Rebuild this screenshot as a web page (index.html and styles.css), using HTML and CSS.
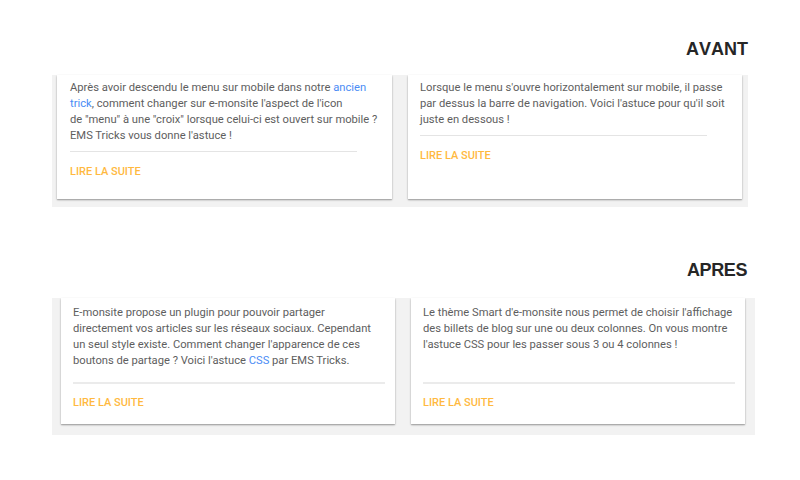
FILE: index.html
```html
<!DOCTYPE html>
<html lang="fr">
<head>
<meta charset="utf-8">
<title>EMS Tricks</title>
<link rel="stylesheet" href="styles.css">
</head>
<body>
<div class="page">
  <h2 class="label label-avant">AVANT</h2>
  <section class="panel panel-avant">
    <article class="card">
      <p class="excerpt">Après avoir descendu le menu sur mobile dans notre <a href="#">ancien</a><br><a href="#">trick</a>, comment changer sur e-monsite l'aspect de l'icon<br>de "menu" à une "croix" lorsque celui-ci est ouvert sur mobile ?<br>EMS Tricks vous donne l'astuce !</p>
      <hr class="sep">
      <a class="more" href="#">Lire la suite</a>
    </article>
    <article class="card">
      <p class="excerpt">Lorsque le menu s'ouvre horizontalement sur mobile, il passe<br>par dessus la barre de navigation. Voici l'astuce pour qu'il soit<br>juste en dessous !</p>
      <hr class="sep">
      <a class="more" href="#">Lire la suite</a>
    </article>
  </section>

  <h2 class="label label-apres">APRES</h2>
  <section class="panel panel-apres">
    <article class="card">
      <p class="excerpt">E-monsite propose un plugin pour pouvoir partager<br>directement vos articles sur les réseaux sociaux. Cependant<br>un seul style existe. Comment changer l'apparence de ces<br>boutons de partage ? Voici l'astuce <a href="#">CSS</a> par EMS Tricks.</p>
      <hr class="sep">
      <a class="more" href="#">Lire la suite</a>
    </article>
    <article class="card">
      <p class="excerpt">Le thème Smart d'e-monsite nous permet de choisir l'affichage<br>des billets de blog sur une ou deux colonnes. On vous montre<br>l'astuce CSS pour les passer sous 3 ou 4 colonnes !</p>
      <hr class="sep">
      <a class="more" href="#">Lire la suite</a>
    </article>
  </section>
</div>
</body>
</html>
```

FILE: styles.css
```css
html, body {
  margin: 0;
  padding: 0;
  background: #ffffff;
}

.page {
  width: 800px;
  height: 480px;
  padding-top: 39px;
  box-sizing: border-box;
  overflow: hidden;
}

.label {
  margin: 0;
  font-family: "Liberation Sans", Arial, sans-serif;
  font-weight: bold;
  font-size: 18px;
  line-height: 20px;
  color: #262626;
  text-align: right;
  font-kerning: none;
}

.label-avant {
  padding-right: 52px;
  margin-bottom: 16px;
}

.label-apres {
  margin-top: 53px;
  padding-right: 53px;
  margin-bottom: 18px;
  letter-spacing: -0.4px;
}

.panel {
  display: flex;
  gap: 16px;
  background: #f2f2f2;
  margin-left: 52px;
  box-sizing: border-box;
}

.panel-avant {
  width: 696px;
  height: 132px;
  padding: 0 6px 8px 5px;
}

.panel-apres {
  width: 703px;
  height: 137px;
  padding: 0 10px 11px 9px;
}

.card {
  flex: 1 1 0;
  min-width: 0;
  overflow: hidden;
  background: #ffffff;
  box-shadow: 0 1px 2px rgba(0, 0, 0, 0.28), 0 1px 1px rgba(0, 0, 0, 0.12);
  font-family: Roboto, "Noto Sans", sans-serif;
  font-size: 11.2px;
  line-height: 16px;
  color: #5e5e5e;
  display: flex;
  flex-direction: column;
  align-items: flex-start;
}

.panel-avant .card {
  padding: 5px 12px 0 13px;
}

.panel-avant .card + .card {
  padding-left: 12px;
}

.panel-apres .card {
  padding: 7px 10px 0 12px;
}

.excerpt {
  margin: 0;
  white-space: nowrap;
}

.excerpt a {
  color: #4b8cf5;
  text-decoration: none;
}

.sep {
  border: 0;
  margin: 0;
  align-self: stretch;
}

.panel-avant .sep {
  height: 1px;
  background: #e4e4e4;
  margin: 7px 23px 12px 0;
}

.panel-apres .excerpt {
  flex: 1;
}

.panel-apres .sep {
  height: 2px;
  background: #ebebeb;
  margin: 0 0 11px 0;
}

.more {
  color: #ffb93f;
  text-decoration: none;
  text-transform: uppercase;
  font-size: 11px;
  font-weight: 500;
  line-height: 16px;
}

.panel-apres .more {
  margin-bottom: 13px;
}
```
